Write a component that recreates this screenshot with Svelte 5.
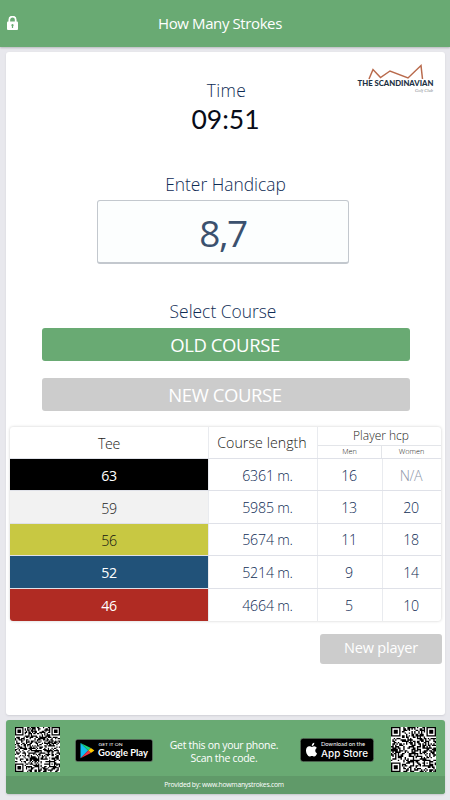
<script lang="ts">
  type Tee = {
    name: string;
    color: string;
    length: string;
    men: string;
    women: string;
  };

  let course = "OLD COURSE";
  const courses = ["OLD COURSE", "NEW COURSE"];

  const tees: Tee[] = [
    { name: "63", color: "black", length: "6361 m.", men: "16", women: "N/A" },
    { name: "59", color: "white", length: "5985 m.", men: "13", women: "20" },
    { name: "56", color: "yellow", length: "5674 m.", men: "11", women: "18" },
    { name: "52", color: "blue", length: "5214 m.", men: "9", women: "14" },
    { name: "46", color: "red", length: "4664 m.", men: "5", women: "10" },
  ];

  // dark modules of a code as one path, with the three finder squares
  function modules(size: number, start: number) {
    let seed = start;
    let d = "";
    for (let y = 0; y < size; y++) {
      for (let x = 0; x < size; x++) {
        seed = (seed * 1103515245 + 12345) % 2147483648;
        let dark = seed / 2147483648 > 0.5;
        for (const [fx, fy] of [[0, 0], [size - 7, 0], [0, size - 7]]) {
          const r = Math.max(Math.abs(x - fx - 3), Math.abs(y - fy - 3));
          if (r <= 4) dark = r !== 2 && r !== 4;
        }
        const a = Math.max(Math.abs(x - size + 7), Math.abs(y - size + 7));
        if (a <= 2) dark = a !== 1;
        if (dark) d += `M${x} ${y}h1v1h-1z`;
      }
    }
    return d;
  }

  const codes = [
    { size: 37, path: modules(37, 71) },
    { size: 33, path: modules(33, 19) },
  ];
</script>

{#snippet qr(code)}
  <svg class="qr" viewBox="0 0 {code.size} {code.size}">
    <rect width={code.size} height={code.size} fill="#fff" />
    <path d={code.path} />
  </svg>
{/snippet}

<div class="page">
  <header>
    <svg class="lock" viewBox="0 0 11 14">
      <path d="M2.300 6V3.800a3.200 3.200 0 0 1 6.400 0V6" fill="none" stroke="#fff" stroke-width="1.700" />
      <rect y="5.500" width="11" height="8.500" rx="1" fill="#fff" />
      <path d="M5.500 8a1.200 1.200 0 0 1 .6 2.200V12H4.900v-1.800A1.200 1.200 0 0 1 5.500 8z" fill="#69aa73" />
    </svg>
    <h1>How Many Strokes</h1>
  </header>

  <main>
    <svg class="logo" viewBox="0 0 80 32">
      <path d="M13 17 17 7.500l7.500 8L34 9l18 7L65 3.500l1.500 13.500" />
      <text class="logo-name" x="1.500" y="24" textLength="76" lengthAdjust="spacingAndGlyphs">THE SCANDINAVIAN</text>
      <text class="logo-sub" x="59" y="29.500" textLength="18" lengthAdjust="spacingAndGlyphs">Golf Club</text>
    </svg>

    <div class="label time-label">Time</div>
    <div class="time">09:51</div>
    <div class="label hcp-label">Enter Handicap</div>
    <div class="hcp">8,7</div>
    <div class="label course-label">Select Course</div>

    <div class="courses">
      {#each courses as name}
        <button class:active={name === course} on:click={() => (course = name)}>{name}</button>
      {/each}
    </div>

    <div class="table">
      <div class="row head">
        <div class="tee">Tee</div>
        <div class="title">Course length</div>
        <div class="player">
          <div class="player-title">Player hcp</div>
          <div class="genders">
            <div>Men</div>
            <div>Women</div>
          </div>
        </div>
      </div>
      {#each tees as tee}
        <div class="row">
          <div class="tee {tee.color}">{tee.name}</div>
          <div class="length">{tee.length}</div>
          <div class="strokes">{tee.men}</div>
          <div class="strokes" class:na={tee.women === "N/A"}>{tee.women}</div>
        </div>
      {/each}
    </div>

    <button class="new-player">New player</button>
  </main>

  <footer>
    <div class="promo">
      {@render qr(codes[0])}
      <svg class="google" viewBox="0 0 78 23">
        <rect x=".3" y=".3" width="77.400" height="22.400" rx="2.500" stroke="#93a897" stroke-width=".6" />
        <path d="M5.500 4v15.200l7.700-7.700z" fill="#12bdf2" />
        <path d="m5.500 4 10.400 5-2.700 2.500z" fill="#19d27a" />
        <path d="m15.900 9 3.500 2.500-3.500 2.600-2.700-2.600z" fill="#ffc900" />
        <path d="m5.500 19.200 7.700-7.700 2.700 2.600z" fill="#ef3547" />
        <text x="23.500" y="7" font-size="4.300" textLength="24" lengthAdjust="spacingAndGlyphs">GET IT ON</text>
        <text x="23" y="17.400" font-size="9.600" font-weight="700" textLength="50" lengthAdjust="spacingAndGlyphs">Google Play</text>
      </svg>
      <p>Get this on your phone.<br />Scan the code.</p>
      <svg class="apple" viewBox="0 0 74 24">
        <rect x=".3" y=".3" width="73.400" height="23.400" rx="3" stroke="#7d9882" stroke-width=".6" />
        <path
          d="M14.300 8.300c-.9 0-1.700.6-2.400.6s-1.500-.6-2.500-.6C7.300 8.400 6 10 6 12.600c0 2.900 2 6 3.600 6 .9 0 1.200-.6 2.300-.6s1.400.6 2.300.6c1.300 0 2.400-2 2.800-3.200-2.200-1-2.300-4.100-.2-5.300-.6-1.100-1.500-1.800-2.500-1.800zM14.300 4.800c-1.600.2-2.600 1.600-2.500 3.200 1.600-.1 2.600-1.600 2.500-3.200z"
          fill="#fff"
        />
        <text x="21" y="8" font-size="4.900" textLength="44" lengthAdjust="spacingAndGlyphs">Download on the</text>
        <text class="store" x="21" y="18.500" font-size="9.500" textLength="47" lengthAdjust="spacingAndGlyphs">App Store</text>
      </svg>
      {@render qr(codes[1])}
    </div>
    <div class="provided">Provided by: www.howmanystrokes.com</div>
  </footer>
</div>

<style>
  :global(body) {
    margin: 0;
    background: #e8e8ed;
  }

  .page {
    width: 450px;
    height: 800px;
    overflow: hidden;
    box-sizing: border-box;
    display: flex;
    flex-direction: column;
    color: #0f2c55;
    font-family: "Open Sans", "Noto Sans", sans-serif;
    background: #e8e8ed;
  }

  header {
    position: relative;
    flex: none;
    height: 47px;
    display: flex;
    align-items: center;
    justify-content: center;
    background: #69aa73;
    box-shadow: 0 1px 2px #b4b7bb;
  }
  h1 {
    margin: 0 10px 2px 0;
    color: #fff;
    font-size: 15px;
    font-weight: 400;
    letter-spacing: -0.4px;
  }
  .lock {
    position: absolute;
    left: 7px;
    top: 16px;
    width: 11px;
    height: 14px;
  }

  main {
    position: relative;
    flex: none;
    box-sizing: border-box;
    width: 439px;
    height: 663px;
    margin: 5px 0 0 6px;
    padding: 26px 4px 0;
    display: flex;
    flex-direction: column;
    background: #fff;
    border-radius: 3px;
    box-shadow: 0 1px 2px #d0d0d7;
  }

  .logo {
    position: absolute;
    right: 9px;
    top: 10px;
    width: 80px;
    height: 32px;
  }
  .logo path {
    fill: none;
    stroke: #b96a4c;
    stroke-width: 1.5;
  }
  .logo-name {
    fill: #1c3144;
    font: 900 6.8px Lato, sans-serif;
  }
  .logo-sub {
    fill: #7d8289;
    font: italic 5px "Liberation Serif", serif;
  }

  .label {
    height: 24px;
    text-align: center;
    font-size: 17.4px;
    line-height: 24px;
    font-weight: 300;
  }
  .time-label {
    padding-left: 2px;
    letter-spacing: 0.4px;
  }
  .time {
    height: 36px;
    color: #080c18;
    text-align: center;
    font: 400 26.5px/35px Lato, sans-serif;
  }
  .hcp-label {
    margin-top: 34px;
  }
  .hcp {
    box-sizing: border-box;
    width: 252px;
    height: 64px;
    margin: 4px auto 0 87px;
    border: 1px solid #c3c8ce;
    border-width: 1px 1px 2px;
    border-radius: 3px;
    color: #3b516e;
    background: #fcfefe;
    text-align: center;
    font-size: 37px;
    line-height: 64px;
    letter-spacing: -1.5px;
  }
  .course-label {
    margin-top: 35px;
    padding-right: 5px;
  }

  button {
    padding: 0;
    border: 0;
    border-radius: 3px;
    color: #fff;
    background: #ccc;
    font-family: inherit;
  }
  .courses {
    width: 368px;
    margin: 5px 0 0 32px;
    display: grid;
    gap: 17px;
  }
  .courses button {
    height: 33px;
    padding-right: 2px;
    font-size: 18.5px;
    line-height: 33px;
    letter-spacing: -0.4px;
  }
  .courses .active {
    background: #69aa73;
  }

  .table {
    width: 431px;
    height: 194px;
    margin-top: 16px;
    display: grid;
    grid-template-rows: 32px repeat(5, 1fr);
    border-radius: 3px;
    overflow: hidden;
    box-shadow: 0 0 3px #ccc;
    font-size: 14.2px;
    font-weight: 300;
  }
  .row {
    display: grid;
    grid-template-columns: 199px 109px 65px 58px;
    border-bottom: 1px solid #dfe1e8;
  }
  .row:last-child {
    border: 0;
  }
  .row > div {
    display: flex;
    align-items: center;
    justify-content: center;
    border-right: 1px solid #e9ebef;
  }
  .row > div:last-child {
    border-right: 0;
  }
  .row > .tee {
    letter-spacing: -0.3px;
    padding-top: 2px;
  }
  .row > .length {
    padding: 1px 0 0 9px;
    letter-spacing: -0.2px;
  }
  .row > .strokes {
    padding: 1px 2px 0 0;
    letter-spacing: -0.3px;
  }
  .head {
    color: #1c1c20;
  }
  .head .title {
    padding-right: 2px;
    letter-spacing: 0.05px;
  }
  .head .player {
    grid-column: 3 / 5;
    display: grid;
    grid-template-rows: 19px 1fr;
    align-items: stretch;
    justify-content: stretch;
    font-size: 12px;
  }
  .player-title {
    padding-left: 3px;
    border-bottom: 1px solid #e3e5e9;
    text-align: center;
    line-height: 17px;
  }
  .genders {
    display: grid;
    grid-template-columns: 64px 1fr;
    text-align: center;
    font-size: 7.3px;
    line-height: 11px;
  }
  .genders div:first-child {
    border-right: 1px solid #e3e5e9;
  }
  .row > .na {
    color: #8d96a8;
  }
  .black {
    color: #fff;
    background: #000;
    font-weight: 400;
  }
  .white {
    color: #222;
    background: #f2f2f2;
  }
  .yellow {
    color: #111;
    background: #c8c842;
  }
  .blue {
    color: #fff;
    background: #215279;
    font-weight: 400;
  }
  .red {
    color: #fff;
    background: #b02b23;
    font-weight: 400;
  }

  .new-player {
    align-self: flex-end;
    width: 122px;
    height: 30px;
    margin: 13px -1px 0 0;
    font-size: 14.5px;
    line-height: 26px;
    padding-bottom: 3px;
    letter-spacing: -0.2px;
  }

  footer {
    flex: none;
    width: 439px;
    height: 74px;
    margin: 5px 0 0 6px;
    display: flex;
    flex-direction: column;
    border-radius: 3px;
    overflow: hidden;
    color: #fff;
    background: #69aa73;
    box-shadow: 0 1px 2px #c5c5cc;
  }
  .promo {
    height: 58px;
    padding: 0 9px;
    display: flex;
    align-items: center;
  }
  .promo svg {
    flex: none;
  }
  .promo text {
    fill: #fff;
    font-family: Lato, sans-serif;
  }
  .promo .store {
    font-family: Inter, sans-serif;
    font-weight: 500;
  }
  .promo .qr {
    width: 45px;
    height: 45px;
    margin-top: 2px;
  }
  .google {
    width: 78px;
    height: 23px;
    margin: 4px 0 0 15px;
  }
  .promo p {
    flex: 1;
    margin: 8px 5px 0 0;
    text-align: center;
    font-size: 10.5px;
    line-height: 13px;
    letter-spacing: -0.3px;
    white-space: nowrap;
  }
  .apple {
    width: 74px;
    height: 24px;
    margin: 3px 17px 0 0;
  }
  .provided {
    flex: 1;
    padding-right: 3px;
    background: #609a69;
    text-align: center;
    font-size: 6.8px;
    font-weight: 500;
    line-height: 18px;
    letter-spacing: -0.25px;
  }
</style>
